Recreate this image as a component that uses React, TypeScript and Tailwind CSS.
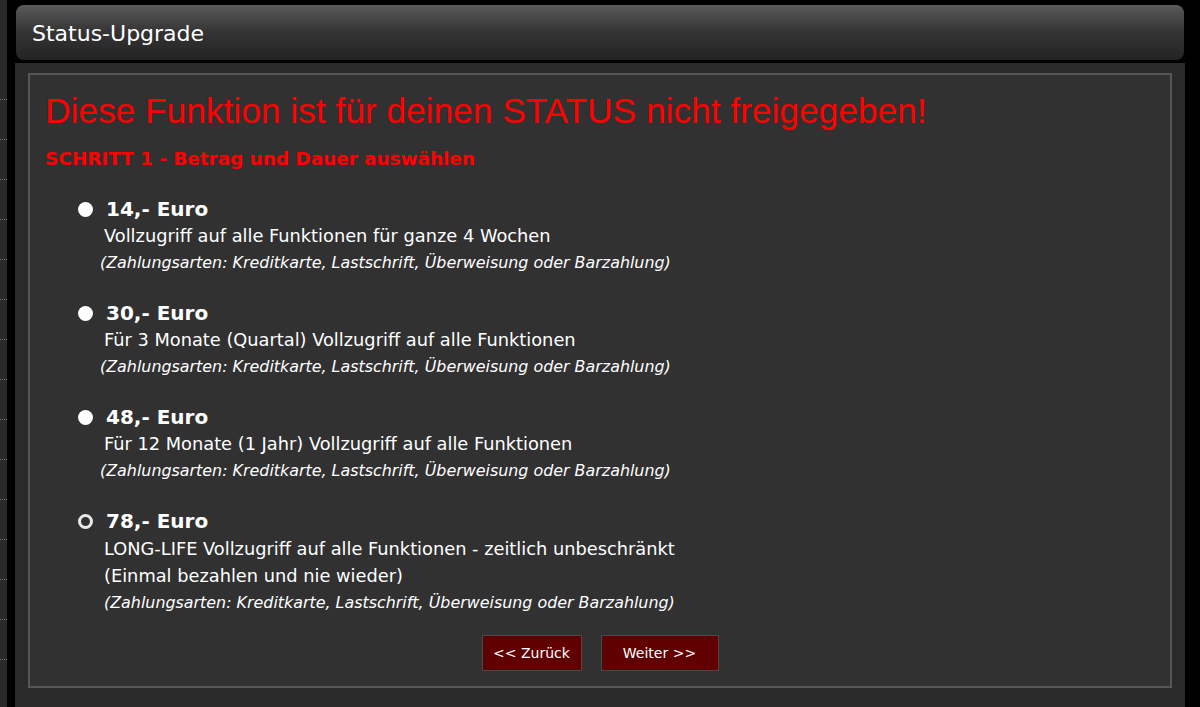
import React from 'react';

const sans = { fontFamily: '"DejaVu Sans", Verdana, sans-serif' };

type Plan = {
  price: string;
  lines: string[];
  selected: boolean;
};

const plans: Plan[] = [
  { price: '14,- Euro', lines: ['Vollzugriff auf alle Funktionen für ganze 4 Wochen'], selected: true },
  { price: '30,- Euro', lines: ['Für 3 Monate (Quartal) Vollzugriff auf alle Funktionen'], selected: true },
  { price: '48,- Euro', lines: ['Für 12 Monate (1 Jahr) Vollzugriff auf alle Funktionen'], selected: true },
  {
    price: '78,- Euro',
    lines: ['LONG-LIFE Vollzugriff auf alle Funktionen - zeitlich unbeschränkt', '(Einmal bezahlen und nie wieder)'],
    selected: false,
  },
];

const PlanOption = ({ plan }: { plan: Plan }) => (
  <div className="flex flex-col">
    <div className="flex items-center h-[26px]">
      {plan.selected ? (
        <span className="w-[15px] h-[15px] rounded-full bg-white ml-[33px]" />
      ) : (
        <span className="w-[15px] h-[15px] rounded-full border-[3px] border-[#e8e8e8] ml-[33px]" />
      )}
      <span className="ml-[13px] text-[20px] font-bold text-white" style={sans}>
        {plan.price}
      </span>
    </div>
    <div className={`pl-[59px] text-[17.8px] leading-[27px] text-white ${plan.selected ? '' : 'mt-[1px]'}`} style={sans}>
      {plan.lines.map((l) => (
        <div key={l}>{l}</div>
      ))}
    </div>
    <div
      className={`${plan.selected ? 'pl-[55px]' : 'pl-[59px]'} text-[15.9px] leading-[27px] italic text-white`}
      style={sans}
    >
      (Zahlungsarten: Kreditkarte, Lastschrift, Überweisung oder Barzahlung)
    </div>
  </div>
);

export default function App() {
  return (
    <div className="w-[1200px] h-[707px] bg-black flex overflow-hidden">
      {/* sliver of neighbouring panel */}
      <div className="w-[7px] h-full bg-[#2a2a2a] flex flex-col pt-[99px] gap-[39px]">
        {Array.from({ length: 15 }).map((_, i) => (
          <div key={i} className="h-px border-t border-dotted border-[#777] w-full" />
        ))}
      </div>

      <div className="ml-[8px] w-[1170px] flex flex-col">
        <div className="mt-[5px] ml-[1px] w-[1168px] h-[55px] rounded-[8px] bg-gradient-to-b from-[#5a5a5a] via-[#343434] to-[#232323] flex items-center pl-[16px]">
          <span className="text-[22px] text-white mt-[1px]" style={sans}>Status-Upgrade</span>
        </div>

        <div className="mt-[3px] flex-1 bg-[#2a2a2a] px-[13px] pt-[10px] pb-[19px] flex flex-col">
          <div className="flex-1 border-2 border-[#565656] bg-[#313131] flex flex-col pl-[15px]">
            <h1
              className="mt-[16px] text-[35.3px] leading-[40px] text-[#ff0000]"
              style={{ fontFamily: '"Liberation Sans", Arial, sans-serif' }}
            >
              Diese Funktion ist für deinen STATUS nicht freigegeben!
            </h1>
            <h2 className="mt-[17px] text-[18.4px] font-bold text-[#ff0000] leading-[22px]" style={sans}>
              SCHRITT 1 - Betrag und Dauer auswählen
            </h2>

            <div className="mt-[26px] flex flex-col gap-[24px]">
              {plans.map((p) => (
                <PlanOption key={p.price} plan={p} />
              ))}
            </div>

            <div className="mt-[19px] flex justify-center gap-[19px] pr-[15px]">
              <button
                className="w-[100px] h-[36px] bg-[#600000] border border-[#4a4a4a] text-white text-[14px]"
                style={sans}
              >
                &lt;&lt; Zurück
              </button>
              <button
                className="w-[118px] h-[36px] bg-[#600000] border border-[#4a4a4a] text-white text-[14px]"
                style={sans}
              >
                Weiter &gt;&gt;
              </button>
            </div>
          </div>
        </div>
      </div>
    </div>
  );
}
